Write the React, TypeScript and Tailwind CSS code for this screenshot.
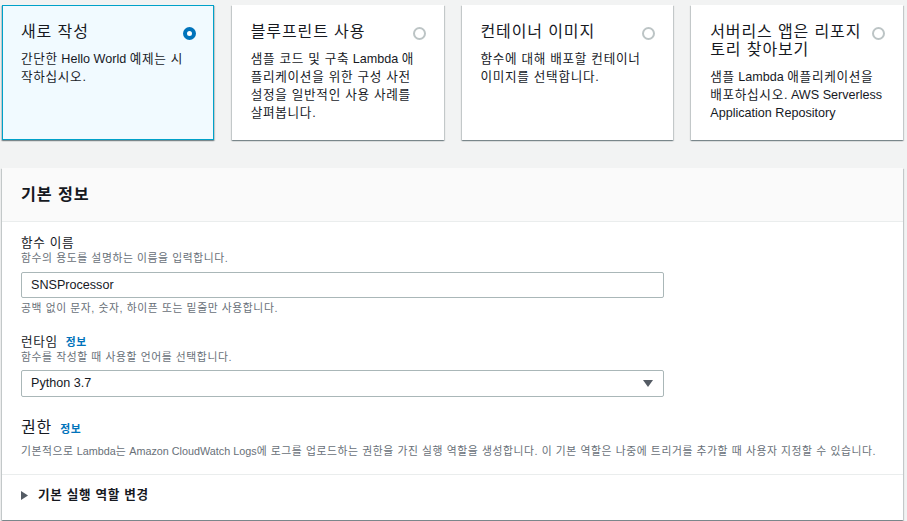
import React from "react";

type Option = {
    title: string;
    desc: string;
    selected?: boolean;
    tight?: boolean;
};

const OPTIONS: Option[] = [
    { title: "새로 작성", desc: "간단한 Hello World 예제는 시작하십시오.", selected: true },
    { title: "블루프린트 사용", desc: "샘플 코드 및 구축 Lambda 애플리케이션을 위한 구성 사전 설정을 일반적인 사용 사례를 살펴봅니다." },
    { title: "컨테이너 이미지", desc: "함수에 대해 배포할 컨테이너 이미지를 선택합니다." },
    { title: "서버리스 앱은 리포지토리 찾아보기", desc: "샘플 Lambda 애플리케이션을\n배포하십시오. AWS Serverless Application Repository", tight: true }
];

const cardShadow =
    "shadow-[0_1px_1px_0_rgba(0,28,36,0.3),1px_1px_1px_0_rgba(0,28,36,0.15),-1px_1px_1px_0_rgba(0,28,36,0.15)]";

// Hangul in the installed font runs narrower than in the screenshot, so text blocks are tracked out
// a little and the Latin words inside them get their normal spacing back
function ko(text: string) {
    return text.split(/([\u3131-\u318E\uAC00-\uD7A3]+)/).map((part, i) =>
        /[A-Za-z0-9]/.test(part) ? (
            <span key={i} className="tracking-normal">{part}</span>
        ) : (
            part
        )
    );
}

function Radio({ checked }: { checked?: boolean }) {
    return checked ? (
        <span className="mt-[4px] w-[13px] h-[13px] shrink-0 rounded-full border-[4px] border-[#0073bb] bg-white" />
    ) : (
        <span className="mt-[4px] w-[13px] h-[13px] shrink-0 rounded-full border-2 border-[#bcc4c5] bg-white" />
    );
}

function InfoLink() {
    return <span className="ml-[8px] text-[10.8px] leading-none font-bold tracking-[0.055em] text-[#0073bb]">정보</span>;
}

export default function App() {
    return (
        <main className="min-h-[521px] bg-[#f2f3f3] pt-[5px] pl-[2px] pr-[4px] pb-[2px] font-['Liberation_Sans','Noto_Sans_CJK_KR',sans-serif] text-[#16191f]">
            {/* Creation options */}
            <div className="grid grid-cols-4 gap-[18px]">
                {OPTIONS.map((opt) => (
                    <div
                        key={opt.title}
                        className={`border pt-[17px] pb-[17px] pl-[18px] pr-[17px] ${cardShadow} ${opt.selected ? "border-[#00a1c9] bg-[#f1faff]" : "border-transparent bg-white"}`}
                    >
                        <div className="flex items-start justify-between gap-[4px]">
                            <h2 className="text-[16px] leading-[18px] font-normal tracking-[0.055em]">{opt.title}</h2>
                            <Radio checked={opt.selected} />
                        </div>
                        <p className={`mt-[9px] whitespace-pre-line text-[12.6px] leading-[18px] tracking-[0.055em] ${opt.tight ? "mr-0" : "mr-[5px]"}`}>{ko(opt.desc)}</p>
                    </div>
                ))}
            </div>

            {/* Basic info panel */}
            <section className={`mt-[28px] bg-white ${cardShadow}`}>
                <div className="h-[54px] flex items-center pl-[19px] bg-[#fafafa] border-b border-[#eaeded]">
                    <h2 className="text-[16.2px] font-bold tracking-[0.055em]">기본 정보</h2>
                </div>

                <div className="pl-[19px] pr-[19px] pt-[14px] pb-[15px]">
                    <label className="block text-[12.6px] leading-[15px] tracking-[0.055em]">함수 이름</label>
                    <p className="text-[10.8px] leading-[15px] tracking-[0.055em] text-[#687078]">함수의 용도를 설명하는 이름을 입력합니다.</p>
                    <div className="mt-[6px] w-[643px] h-[26px] flex items-center pl-[9px] border border-[#aab7b8] rounded-[2px] text-[12.6px]">
                        SNSProcessor
                    </div>
                    <p className="mt-[3px] text-[10.8px] leading-[15px] tracking-[0.055em] text-[#687078]">공백 없이 문자, 숫자, 하이픈 또는 밑줄만 사용합니다.</p>

                    <div className="mt-[19px] text-[12.6px] leading-[15px] tracking-[0.055em]">
                        런타임<InfoLink />
                    </div>
                    <p className="text-[10.8px] leading-[15px] tracking-[0.055em] text-[#687078]">함수를 작성할 때 사용할 언어를 선택합니다.</p>
                    <div className="mt-[5px] w-[643px] h-[27px] flex items-center justify-between pl-[9px] pr-[10px] border border-[#aab7b8] rounded-[2px] text-[12.6px]">
                        <span>Python 3.7</span>
                        <svg width="10" height="7" viewBox="0 0 10 7">
                            <path d="M0 0 L10 0 L5 7 Z" fill="#545b64" />
                        </svg>
                    </div>

                    <div className="mt-[21px] text-[16px] leading-[20px] tracking-[0.055em]">
                        권한<InfoLink />
                    </div>
                    <p className="mt-[6px] text-[10.8px] leading-[15px] tracking-[0.055em] text-[#687078]">
                        {ko("기본적으로 Lambda는 Amazon CloudWatch Logs에 로그를 업로드하는 권한을 가진 실행 역할을 생성합니다. 이 기본 역할은 나중에 트리거를 추가할 때 사용자 지정할 수 있습니다.")}
                    </p>
                </div>

                <div className="border-t border-[#eaeded] pl-[19px] pt-[11px] pb-[16px] flex items-center gap-[10px]">
                    <svg width="7" height="9" viewBox="0 0 7 9">
                        <path d="M0 0 L7 4.5 L0 9 Z" fill="#545b64" />
                    </svg>
                    <span className="text-[12.6px] leading-[18px] font-bold tracking-[0.055em]">기본 실행 역할 변경</span>
                </div>
            </section>
        </main>
    );
}
